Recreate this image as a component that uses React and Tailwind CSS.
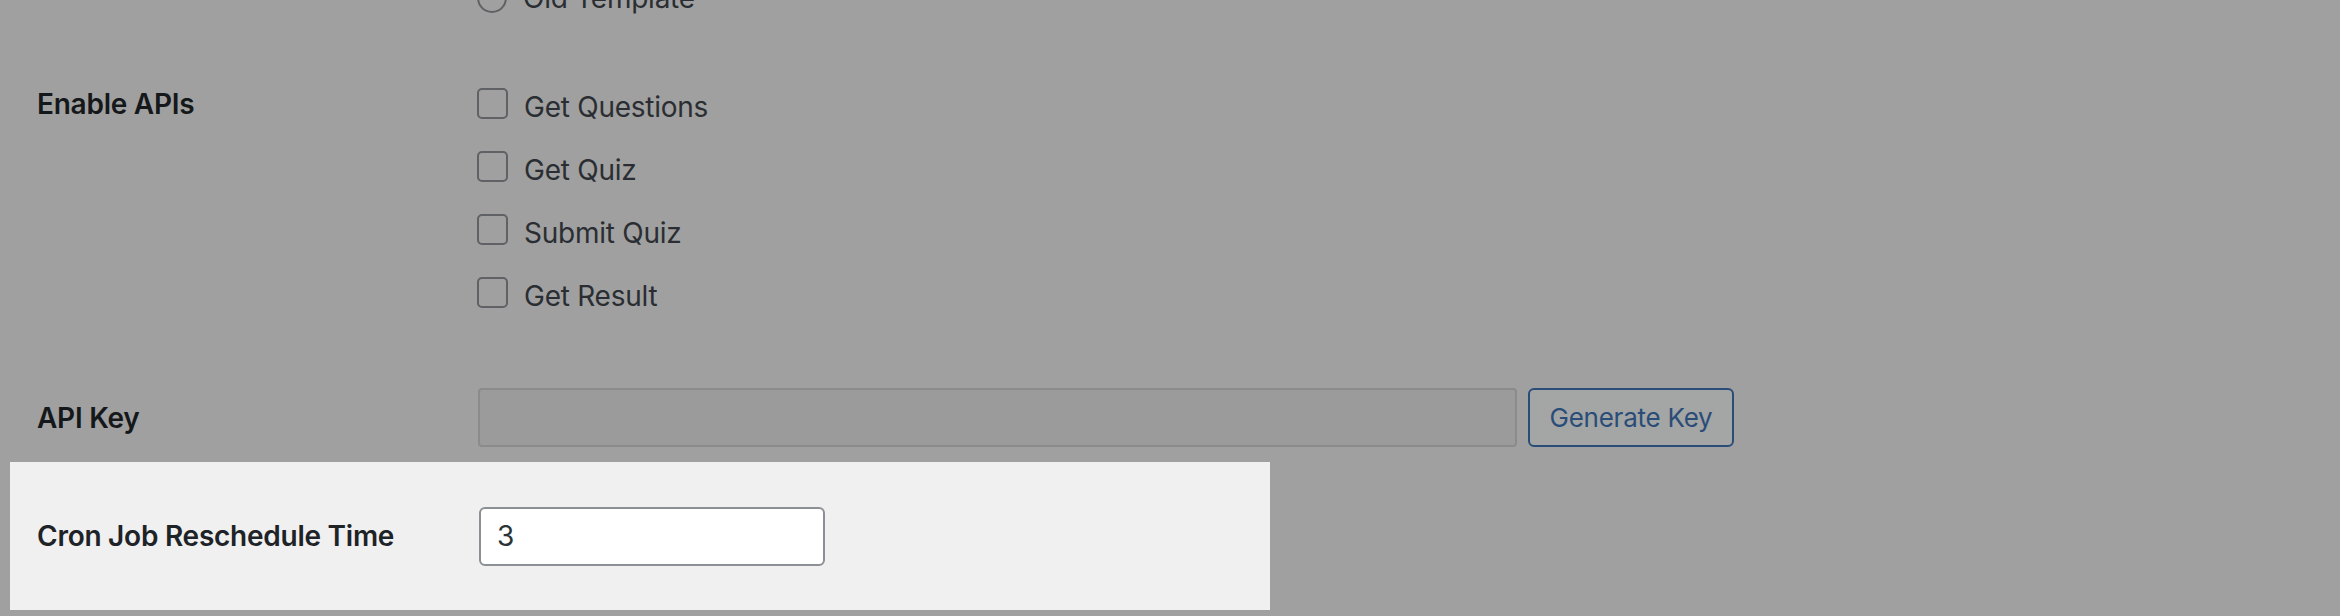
export default function App() {
  const apis = ['Get Questions', 'Get Quiz', 'Submit Quiz', 'Get Result'];

  return (
    <div className="h-[616px] w-[2340px] overflow-hidden bg-[#a0a0a0] font-['Inter','Noto_Sans',sans-serif] text-[28px] tracking-[-0.25px]">
      {/* template choice, scrolled mostly out of view */}
      <div className="-mt-[22px] flex h-[40px] items-center">
        <div className="w-[440px] shrink-0" />
        <div className="ml-[37px] flex items-center gap-[16px] text-[#2a2e32]">
          <span className="h-[30px] w-[30px] rounded-full border-2 border-[#5f6164]" />
          <span>Old Template</span>
        </div>
      </div>

      <div className="mt-[57px] flex">
        <div className="ml-[37px] w-[441px] shrink-0 font-semibold leading-[59px] text-[#15181a]">
          Enable APIs
        </div>
        <div className="flex flex-col">
          {apis.map((name) => (
            <label key={name} className="flex h-[63px] items-center gap-[16px] text-[#2a2e32]">
              <span className="mb-[7px] -ml-px h-[31px] w-[31px] rounded-[5px] border-2 border-[#5f6164]" />
              <span>{name}</span>
            </label>
          ))}
        </div>
      </div>

      <div className="mt-[61px] flex items-center">
        <div className="ml-[37px] w-[441px] shrink-0 font-semibold text-[#15181a]">API Key</div>
        <div className="h-[59px] w-[1039px] rounded-[4px] border-2 border-[#8b8b8b] bg-[#9b9b9b]" />
        <button className="ml-[11px] h-[59px] w-[206px] rounded-[6px] border-2 border-[#2a4d78] bg-[#a4a5a5] text-[26px] text-[#2a4d78]">
          Generate Key
        </button>
      </div>

      <div className="ml-[10px] mt-[15px] flex h-[148px] w-[1260px] items-center bg-[#f0f0f0] pl-[27px]">
        <div className="w-[442px] shrink-0 font-semibold text-[#1d2327]">Cron Job Reschedule Time</div>
        <input
          type="text"
          defaultValue="3"
          className="h-[59px] w-[346px] rounded-[6px] border-2 border-[#8c8f94] bg-white px-[16px] text-[28px] text-[#2c3338] outline-none"
        />
      </div>
    </div>
  );
}
